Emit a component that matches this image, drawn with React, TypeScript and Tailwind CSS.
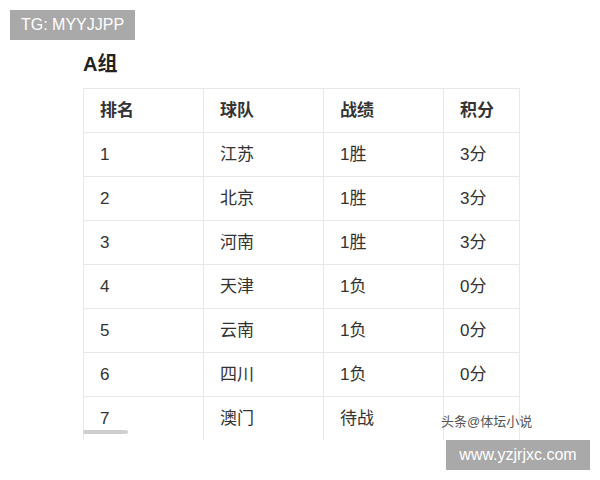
import React from "react";

const rows = [
  ["1", "江苏", "1胜", "3分"],
  ["2", "北京", "1胜", "3分"],
  ["3", "河南", "1胜", "3分"],
  ["4", "天津", "1负", "0分"],
  ["5", "云南", "1负", "0分"],
  ["6", "四川", "1负", "0分"],
  ["7", "澳门", "待战", ""],
];

const widths = ["w-[120px]", "w-[120px]", "w-[120px]", "w-[76px]"];

export default function App() {
  const font = { fontFamily: '"Liberation Sans", "Noto Sans CJK SC", sans-serif' };
  return (
    <div className="relative w-[600px] h-[480px] bg-white overflow-hidden text-[#333]" style={font}>
      <div className="absolute left-[10px] top-[10px] w-[125px] h-[30px] bg-[#a9a9a9] text-white text-[16px] flex items-center justify-center">
        TG: MYYJJPP
      </div>
      <div className="pt-[50px] pl-[83px]">
        <h2 className="text-[20px] font-bold leading-[28px] h-[28px] mb-[10px] text-[#222]">A组</h2>
        <div className="h-[352px] overflow-hidden w-[437px] border-l border-t border-[#e8e8e8]">
          <div className="flex h-[44px]">
            {["排名", "球队", "战绩", "积分"].map((h, i) => (
              <div key={i} className={`${widths[i]} shrink-0 flex items-center pl-[16px] border-r border-b border-[#e8e8e8] text-[17px] font-bold text-[#333]`}>
                {h}
              </div>
            ))}
          </div>
          {rows.map((r, ri) => (
            <div key={ri} className="flex h-[44px]">
              {r.map((c, i) => (
                <div key={i} className={`${widths[i]} shrink-0 flex items-center pl-[16px] border-r border-b border-[#e8e8e8] text-[17px] text-[#333]`}>
                  {c}
                </div>
              ))}
            </div>
          ))}
        </div>
      </div>
      <div className="absolute left-[83px] top-[430px] w-[45px] h-[4px] rounded-full bg-[#cfcfcf]" />
      <div className="absolute left-[441px] top-[413px] text-[13px] text-[#555] leading-[18px]">头条@体坛小说</div>
      <div className="absolute left-[446px] top-[440px] w-[144px] h-[30px] bg-[#a9a9a9] text-white text-[16px] flex items-center justify-center">
        www.yzjrjxc.com
      </div>
    </div>
  );
}
